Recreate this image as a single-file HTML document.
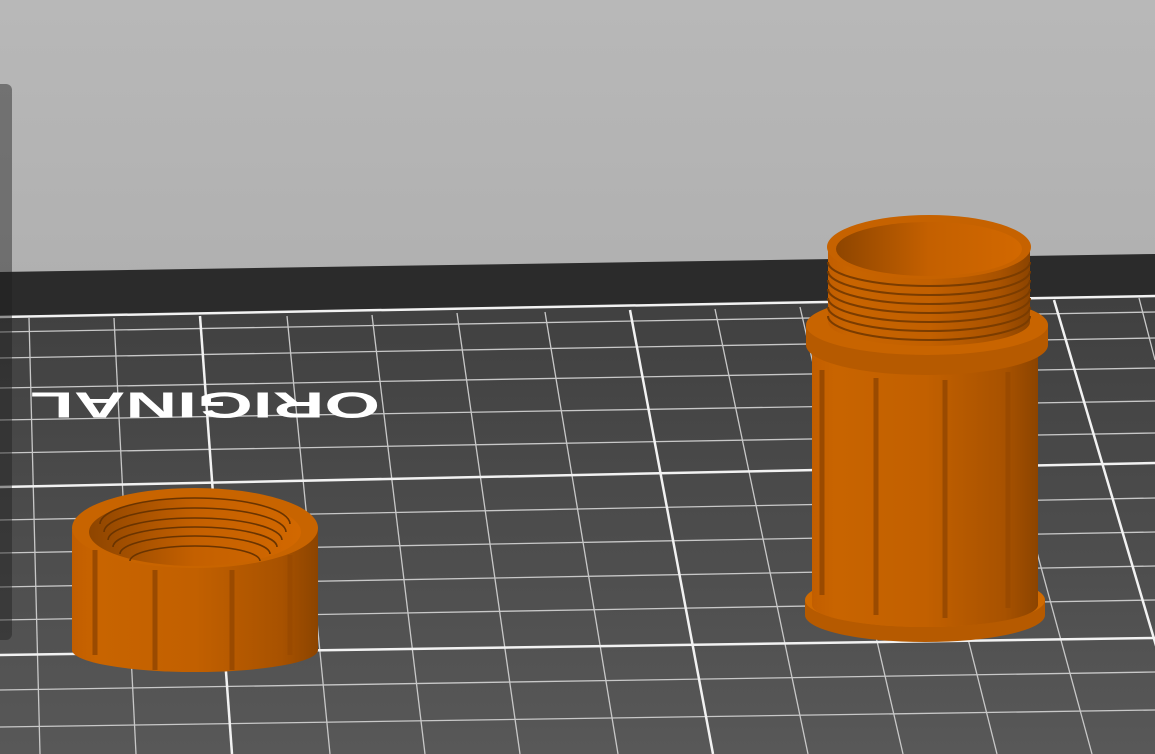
<!DOCTYPE html>
<html><head><meta charset="utf-8"><style>
html,body{margin:0;padding:0;width:1155px;height:754px;overflow:hidden;background:#b0b0b0}
svg{display:block}
</style></head><body>
<svg width="1155" height="754" viewBox="0 0 1155 754" xmlns="http://www.w3.org/2000/svg">
<defs>
<linearGradient id="sky" x1="0" y1="0" x2="0" y2="1"><stop offset="0" stop-color="#b8b8b8"/><stop offset="1" stop-color="#a3a3a3"/></linearGradient>
<linearGradient id="plate" x1="0" y1="0" x2="0" y2="1"><stop offset="0" stop-color="#404040"/><stop offset="1" stop-color="#585858"/></linearGradient>
<linearGradient id="body" x1="0" y1="0" x2="1" y2="0"><stop offset="0" stop-color="#c25e00"/><stop offset="0.1" stop-color="#c86400"/><stop offset="0.5" stop-color="#c26000"/><stop offset="0.85" stop-color="#a85200"/><stop offset="1" stop-color="#8c4400"/></linearGradient>
<linearGradient id="inner" x1="0" y1="0" x2="1" y2="0"><stop offset="0" stop-color="#8e4500"/><stop offset="0.5" stop-color="#c46000"/><stop offset="1" stop-color="#d26800"/></linearGradient>
</defs>
<rect width="1155" height="754" fill="url(#sky)"/>
<polygon points="0,272 1155,254 1155,754 0,754" fill="#2b2b2b"/>
<polygon points="0,318 1155,296 1155,754 0,754" fill="url(#plate)"/>
<g stroke="#c8c8c8" stroke-width="1.3">
<line x1="0" y1="332" x2="1155" y2="312"/>
<line x1="0" y1="358" x2="1155" y2="338"/>
<line x1="0" y1="388" x2="1155" y2="368"/>
<line x1="0" y1="420" x2="1155" y2="401"/>
<line x1="0" y1="453" x2="1155" y2="433"/>
<line x1="0" y1="520" x2="1155" y2="498"/>
<line x1="0" y1="553" x2="1155" y2="532"/>
<line x1="0" y1="587" x2="1155" y2="566"/>
<line x1="0" y1="620" x2="1155" y2="600"/>
<line x1="0" y1="690" x2="1155" y2="672"/>
<line x1="0" y1="727" x2="1155" y2="710"/>
<line x1="29" y1="318" x2="40" y2="754"/>
<line x1="114" y1="318" x2="136" y2="754"/>
<line x1="287" y1="316" x2="330" y2="754"/>
<line x1="372" y1="315" x2="425" y2="754"/>
<line x1="457" y1="313" x2="520" y2="754"/>
<line x1="545" y1="312" x2="618" y2="754"/>
<line x1="715" y1="309" x2="808" y2="754"/>
<line x1="800" y1="307" x2="903" y2="754"/>
<line x1="884" y1="305" x2="997" y2="754"/>
<line x1="969" y1="303" x2="1092" y2="754"/>
<line x1="1139" y1="298" x2="1155" y2="360"/>
</g>
<g stroke="#f2f2f2" stroke-width="2.5">
<line x1="0" y1="317" x2="1155" y2="296"/>
<line x1="0" y1="487" x2="1155" y2="463"/>
<line x1="0" y1="655" x2="1155" y2="638"/>
<line x1="200" y1="316" x2="232" y2="754"/>
<line x1="630" y1="310" x2="713" y2="754"/>
<line x1="1054" y1="300" x2="1188" y2="754"/>
</g>
<text x="30" y="402" transform="rotate(180 205 402)" dominant-baseline="middle" textLength="350" lengthAdjust="spacingAndGlyphs" font-family="Liberation Sans, sans-serif" font-weight="bold" font-size="36" fill="#fff">ORIGINAL</text>

<!-- nut -->
<path d="M72,530 L72,650 A123,22 0 0 0 318,650 L318,530 Z" fill="url(#body)"/>
<ellipse cx="195" cy="528" rx="123" ry="40" fill="#c86400"/>
<ellipse cx="195" cy="532" rx="106" ry="34" fill="url(#inner)"/>
<g fill="none" stroke="#6a3400" stroke-width="1.6">
<path d="M100,524 A95,26 0 0 1 290,524"/>
<path d="M104,532 A91,24 0 0 1 286,532"/>
<path d="M108,540 A87,22 0 0 1 282,540"/>
<path d="M113,547 A82,20 0 0 1 277,547"/>
<path d="M120,554 A75,18 0 0 1 270,554"/>
<path d="M130,561 A65,15 0 0 1 260,561"/>
</g>
<g stroke="#9a4a00" stroke-width="5">
<line x1="95" y1="550" x2="95" y2="655"/>
<line x1="155" y1="570" x2="155" y2="670"/>
<line x1="232" y1="570" x2="232" y2="670"/>
<line x1="290" y1="555" x2="290" y2="655"/>
</g>

<!-- tall cylinder -->
<path d="M805,600 L805,615 A120,27 0 0 0 1045,615 L1045,600 Z" fill="#b65a00"/>
<ellipse cx="925" cy="600" rx="120" ry="27" fill="#d06a00"/>
<path d="M812,340 L812,605 A113,22 0 0 0 1038,605 L1038,340 Z" fill="url(#body)"/>
<g stroke="#9a4a00" stroke-width="5">
<line x1="822" y1="370" x2="822" y2="595"/>
<line x1="876" y1="378" x2="876" y2="615"/>
<line x1="945" y1="380" x2="945" y2="618"/>
<line x1="1008" y1="372" x2="1008" y2="608"/>
</g>
<path d="M806,325 L806,345 A121,30 0 0 0 1048,345 L1048,325 Z" fill="#b65a00"/>
<ellipse cx="927" cy="325" rx="121" ry="30" fill="#c86400"/>
<path d="M828,245 L828,322 A101,24 0 0 0 1030,322 L1030,245 Z" fill="url(#body)"/>
<g fill="none" stroke="#7a3c00" stroke-width="2">
<path d="M828,262 A101,24 0 0 0 1030,262"/>
<path d="M828,271 A101,24 0 0 0 1030,271"/>
<path d="M828,280 A101,24 0 0 0 1030,280"/>
<path d="M828,289 A101,24 0 0 0 1030,289"/>
<path d="M828,298 A101,24 0 0 0 1030,298"/>
<path d="M828,307 A101,24 0 0 0 1030,307"/>
<path d="M828,316 A101,24 0 0 0 1030,316"/>
</g>
<ellipse cx="929" cy="247" rx="102" ry="32" fill="#c66200"/>
<ellipse cx="929" cy="249" rx="93" ry="27" fill="url(#inner)"/>

<!-- left toolbar -->
<rect x="-8" y="84" width="20" height="556" rx="6" fill="#1e1e1e" opacity="0.45"/>
</svg>
</body></html>
